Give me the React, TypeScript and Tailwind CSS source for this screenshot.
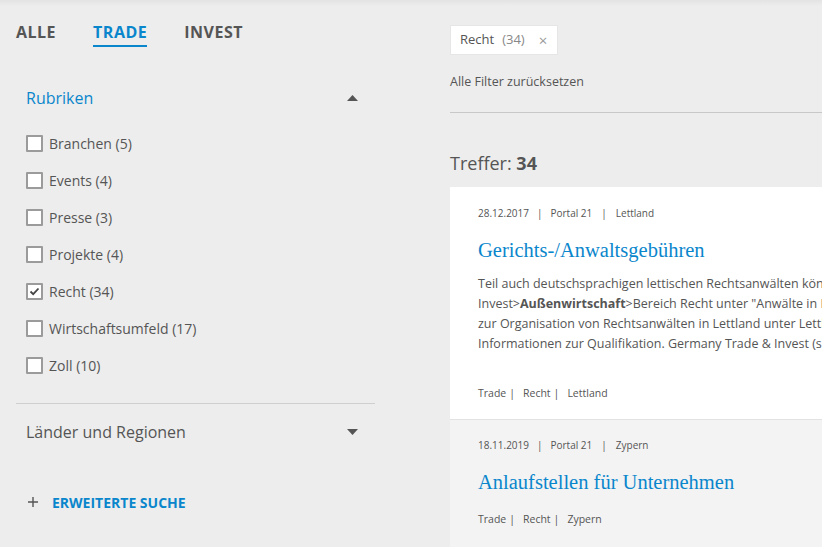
import React from "react";

const sans = { fontFamily: "'Open Sans', 'Noto Sans', sans-serif" };
const serif = { fontFamily: "'Liberation Serif', 'DejaVu Serif', serif" };

function Checkbox({ checked }: { checked?: boolean }) {
  return (
    <span className="w-[17px] h-[17px] border-2 border-[#9b9b9b] bg-white rounded-[1px] flex items-center justify-center shrink-0">
      {checked && (
        <svg width="11" height="9" viewBox="0 0 11 9">
          <path d="M1.5 4.5 L4.2 7.2 L9.5 1.5" fill="none" stroke="#444" strokeWidth="1.8" />
        </svg>
      )}
    </span>
  );
}

function Tri({ up }: { up?: boolean }) {
  return (
    <svg width="11" height="6" viewBox="0 0 11 6">
      {up ? <path d="M0 6 L5.5 0 L11 6 Z" fill="#555" /> : <path d="M0 0 L5.5 6 L11 0 Z" fill="#555" />}
    </svg>
  );
}

const items: [string, boolean][] = [
  ["Branchen (5)", false],
  ["Events (4)", false],
  ["Presse (3)", false],
  ["Projekte (4)", false],
  ["Recht (34)", true],
  ["Wirtschaftsumfeld (17)", false],
  ["Zoll (10)", false],
];

function Meta({ date, country }: { date: string; country: string }) {
  return (
    <div className="text-[10px] leading-[16px] text-[#555] flex whitespace-nowrap">
      <span>{date}</span>
      <span className="mx-[8px]">|</span>
      <span>Portal 21</span>
      <span className="mx-[9px]">|</span>
      <span>{country}</span>
    </div>
  );
}

function Tags({ country }: { country: string }) {
  return (
    <div className="text-[10.5px] leading-[16px] text-[#555] flex whitespace-nowrap">
      <span>Trade</span>
      <span className="ml-[3px] mr-[8px]">|</span>
      <span>Recht</span>
      <span className="ml-[3px] mr-[8px]">|</span>
      <span>{country}</span>
    </div>
  );
}

export default function App() {
  return (
    <div
      className="w-[822px] h-[547px] overflow-hidden bg-[linear-gradient(#e3e3e3,#ededed_6px)] flex text-[#555]"
      style={sans}
    >
      {/* Left column */}
      <div className="w-[359px] ml-[16px] shrink-0 flex flex-col">
        <div className="flex gap-[37px] mt-[20px] text-[16px] font-bold leading-[24px] tracking-[0.5px]">
          <span className="text-[#555] pb-px border-b-2 border-transparent">ALLE</span>
          <span className="text-[#0a86cc] pb-px border-b-2 border-[#0a86cc]">TRADE</span>
          <span className="text-[#555] pb-px border-b-2 border-transparent">INVEST</span>
        </div>

        <div className="border-b border-[#cfcfcf] pb-[19px] shrink-0">
          <div className="mt-[39px] pl-[10px] pr-[17px] flex items-center justify-between h-[24px]">
            <span className="text-[16px] text-[#0a86cc]">Rubriken</span>
            <Tri up />
          </div>
          <div className="mt-[15px] pl-[10px] flex flex-col">
            {items.map(([label, checked]) => (
              <div key={label} className="h-[37px] flex items-center gap-[6px] shrink-0">
                <Checkbox checked={checked} />
                <span className="text-[14px] text-[#555]">{label}</span>
              </div>
            ))}
          </div>
        </div>

        <div className="mt-[16px] pl-[10px] pr-[17px] flex items-center justify-between h-[24px] shrink-0">
          <span className="text-[16px] text-[#555]">Länder und Regionen</span>
          <Tri />
        </div>

        <div className="mt-[46px] pl-[12px] flex items-center gap-[14px] h-[24px] shrink-0">
          <svg width="10" height="10" viewBox="0 0 10 10">
            <path d="M5 0 V10 M0 5 H10" stroke="#555" strokeWidth="1.4" />
          </svg>
          <span className="text-[14px] font-bold text-[#0a86cc]">ERWEITERTE SUCHE</span>
        </div>
      </div>

      {/* Right column */}
      <div className="ml-[75px] w-[600px] shrink-0 flex flex-col">
        <div className="mt-[25px] flex shrink-0">
          <div className="h-[30px] bg-white border border-[#e6e6e6] flex items-center pl-[9px] pr-[10px] text-[13px]">
            <span className="text-[#555]">Recht</span>
            <span className="text-[#888] ml-[8px]">(34)</span>
            <span className="text-[#999] ml-[14px] text-[15px] leading-none">×</span>
          </div>
        </div>
        <div className="mt-[18px] text-[12.5px] leading-[18px] text-[#555] shrink-0">Alle Filter zurücksetzen</div>
        <div className="mt-[21px] border-t border-[#c8c8c8] shrink-0" />
        <div className="mt-[38px] text-[18px] leading-[24px] text-[#555] shrink-0">
          Treffer: <span className="font-bold">34</span>
        </div>

        <div className="mt-[12px] bg-white h-[232px] shrink-0 pl-[28px] pt-[18px] flex flex-col">
          <Meta date="28.12.2017" country="Lettland" />
          <div className="mt-[15px] text-[20.5px] leading-[28px] text-[#0a86cc] whitespace-nowrap" style={serif}>
            Gerichts-/Anwaltsgebühren
          </div>
          <div className="mt-[10px] text-[12.5px] leading-[20px] text-[#555] whitespace-nowrap">
            <div>Teil auch deutschsprachigen lettischen Rechtsanwälten können Sie über</div>
            <div>
              Invest&gt;<span className="font-bold">Außenwirtschaft</span>&gt;Bereich Recht unter "Anwälte in Lettland"
            </div>
            <div>zur Organisation von Rechtsanwälten in Lettland unter Lettland finden Sie</div>
            <div>Informationen zur Qualifikation. Germany Trade &amp; Invest (s. o.)</div>
          </div>
          <div className="mt-[31px]">
            <Tags country="Lettland" />
          </div>
        </div>

        <div className="bg-[#f3f3f3] border-t border-[#e2e2e2] h-[200px] shrink-0 pl-[28px] pt-[17px] flex flex-col">
          <Meta date="18.11.2019" country="Zypern" />
          <div className="mt-[15px] text-[20.5px] leading-[28px] text-[#0a86cc] whitespace-nowrap" style={serif}>
            Anlaufstellen für Unternehmen
          </div>
          <div className="mt-[15px]">
            <Tags country="Zypern" />
          </div>
        </div>
      </div>
    </div>
  );
}
